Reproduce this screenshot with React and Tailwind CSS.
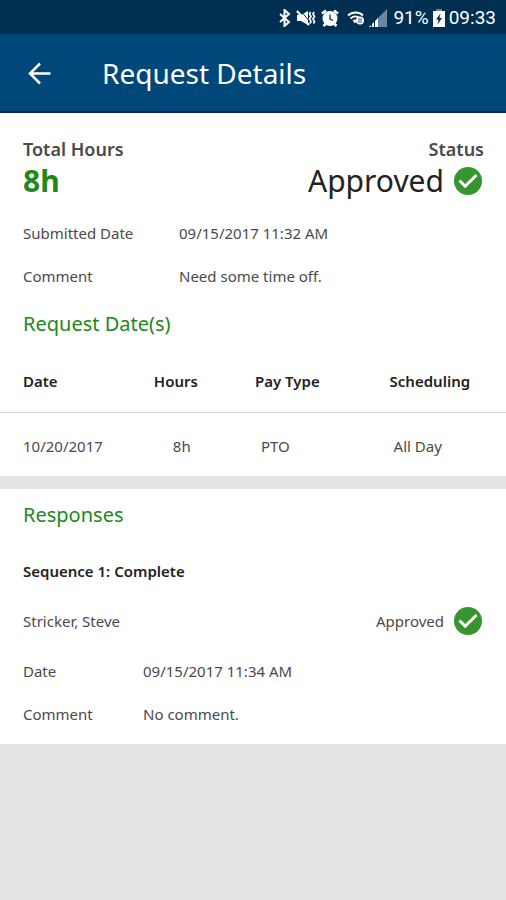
import React from 'react';

const requestDates = [
    { id: 1, date: '10/20/2017', hours: '8h', payType: 'PTO', scheduling: 'All Day' }
];

const BluetoothIcon = () => (
    <svg viewBox="0 0 12 18" className="w-3 h-[18px]" fill="none" stroke="currentColor" strokeWidth="2">
        <path d="M1 5l9 8-4.500 4V1L10 5l-9 8" />
    </svg>
);

const VibrateIcon = () => (
    <svg viewBox="0 0 20 18" className="w-5 h-[18px]" fill="none" stroke="currentColor">
        <path d="M1 6h4l7-4v14l-7-4H1z" fill="currentColor" stroke="none" />
        <path d="M1 2l12 14" strokeWidth="2.200" />
        <path d="M5 2l9 11" stroke="#002f52" strokeWidth="1" />
        <path d="M14.500 3l-1 2 1.500 2.500-1.500 2.500 1.500 2.500-1 2M18 3l-1 2 1.500 2.500-1.500 2.500 1.500 2.500-1 2" strokeWidth="1.700" />
    </svg>
);

const AlarmIcon = () => (
    <svg viewBox="0 0 18 18" className="w-[18px] h-[18px]" fill="none" stroke="currentColor">
        <circle cx="9" cy="9.500" r="7.500" fill="currentColor" stroke="none" />
        <path d="M1 4.500l4-3M17 4.500l-4-3M2.500 17l3-3M15.500 17l-3-3" strokeWidth="2.500" />
        <path d="M9 5.500v4.500l3 1.500" stroke="#002f52" strokeWidth="1.300" />
    </svg>
);

const WifiIcon = () => (
    <svg viewBox="0 0 18 16" className="w-[18px] h-4" fill="none" stroke="currentColor" strokeWidth="1.800">
        <path d="M1 5.500c4.500-4 11-4 15 0M3.500 8.500c3-2.700 6.500-2.700 9.500 0" />
        <path d="M5.500 10.500Q8 8.500 10.500 10.500L8 13.500z" fill="currentColor" stroke="none" />
        <circle cx="13" cy="10.500" r="4" fill="currentColor" stroke="none" />
        <path d="M12 8v5M14 8v5" stroke="#002f52" strokeWidth="0.800" />
    </svg>
);

const SignalIcon = () => (
    <svg viewBox="0 0 18 18" className="w-[18px] h-[18px]" fill="currentColor">
        <path d="M18 0v18H9V9z" fill="#6887a0" />
        <path d="M0 18l2-2v2zM3 18v-3l2-2v5zM6 18v-6l3-3v9z" />
    </svg>
);

const BatteryIcon = () => (
    <svg viewBox="0 0 12 18" className="w-3 h-[18px]" fill="currentColor">
        <path d="M3 0h6v2H3z" fill="#6887a0" />
        <path d="M0 2h12v16H0z" />
        <path d="M7.500 4.500L3 10.500h2.500L4.500 15.500 9 9H6.500z" fill="#002f52" />
    </svg>
);

const BackArrow = () => (
    <svg viewBox="0 0 24 24" className="w-6 h-6" fill="none" stroke="currentColor" strokeWidth="2.500">
        <path d="M23.500 12.500H3M13 2.500l-10 10 10 10" />
    </svg>
);

const CheckCircle = () => (
    <svg viewBox="0 0 28 28" className="w-7 h-7 shrink-0" role="img" aria-label="Approved">
        <circle cx="14" cy="14" r="14" fill="#36952f" />
        <path d="M5.500 13.500l5.700 5.700L22.500 8" fill="none" stroke="#fff" strokeWidth="3" />
    </svg>
);

const StatusBar = () => (
    <div className="flex items-center justify-end h-[34px] pt-0.5 pr-2.5 bg-[#002f52] text-white">
        <div className="flex items-center gap-[5px]">
            <BluetoothIcon />
            <VibrateIcon />
            <AlarmIcon />
        </div>
        <div className="flex items-center gap-1 ml-2">
            <WifiIcon />
            <SignalIcon />
        </div>
        <span className="ml-1.5 font-[Roboto] text-[19px]">91%</span>
        <span className="ml-1"><BatteryIcon /></span>
        <span className="ml-1 font-[Roboto] text-[19px]">09:33</span>
    </div>
);

const App = () => {
    return (
        <div className="min-h-screen bg-[#e4e4e4] font-['Noto_Sans',sans-serif] text-[15px] leading-5 text-[#4a4a4a]">
            <StatusBar />

            {/* Header */}
            <header className="flex items-center h-[79px] pl-[27px] bg-[#00477a] border-b-2 border-[#002070] text-white">
                <button type="button" aria-label="Back">
                    <BackArrow />
                </button>
                <h1 className="ml-[51px] text-[28px] leading-9">Request Details</h1>
            </header>

            <main>
                {/* Summary */}
                <section className="bg-white pt-6">
                    <div className="flex justify-between pl-[23px] pr-[22px]">
                        <div>
                            <div className="text-lg leading-6 font-semibold">Total Hours</div>
                            <div className="text-[30px] leading-10 font-bold text-[#21891a]">8h</div>
                        </div>
                        <div className="text-right">
                            <div className="text-lg leading-6 font-semibold">Status</div>
                            <div className="flex items-center gap-2.5 pr-0.5">
                                <span className="text-[30px] leading-10 text-[#222222]">Approved</span>
                                <CheckCircle />
                            </div>
                        </div>
                    </div>

                    <dl className="grid grid-cols-[156px_1fr] gap-y-[23px] px-[23px] mt-[22px]">
                        <dt>Submitted Date</dt>
                        <dd>09/15/2017 11:32 AM</dd>
                        <dt>Comment</dt>
                        <dd>Need some time off.</dd>
                    </dl>

                    <h2 className="px-[23px] mt-6 text-xl leading-7 text-[#21891a]">Request Date(s)</h2>

                    <table className="w-full mt-3 table-fixed text-left">
                        <thead>
                            <tr className="h-[62px] border-b border-[#d8d8d8] text-[#222222]">
                                <th className="w-[30%] pl-[23px] font-semibold">Date</th>
                                <th className="w-[20%] pl-0.5 font-semibold">Hours</th>
                                <th className="w-[27%] pl-0.5 font-semibold">Pay Type</th>
                                <th className="font-semibold">Scheduling</th>
                            </tr>
                        </thead>
                        <tbody>
                            {requestDates.map(row => (
                                <tr key={row.id} className="h-16">
                                    <td className="pt-1 pl-[23px]">{row.date}</td>
                                    <td className="pt-1 pl-[21px]">{row.hours}</td>
                                    <td className="pt-1 pl-2">{row.payType}</td>
                                    <td className="pt-1 pl-1">{row.scheduling}</td>
                                </tr>
                            ))}
                        </tbody>
                    </table>
                </section>

                {/* Responses */}
                <section className="mt-[13px] bg-white pl-[23px] pr-[22px] pt-3 pb-5">
                    <h2 className="text-xl leading-7 text-[#21891a]">Responses</h2>
                    <h3 className="mt-8 font-semibold text-[#222222]">Sequence 1: Complete</h3>
                    <div className="flex items-center justify-between mt-[26px] pr-0.5">
                        <span>Stricker, Steve</span>
                        <div className="flex items-center gap-2.5">
                            <span>Approved</span>
                            <CheckCircle />
                        </div>
                    </div>
                    <dl className="grid grid-cols-[120px_1fr] gap-y-[23px] mt-[26px]">
                        <dt>Date</dt>
                        <dd>09/15/2017 11:34 AM</dd>
                        <dt>Comment</dt>
                        <dd>No comment.</dd>
                    </dl>
                </section>
            </main>
        </div>
    );
};

export default App;
